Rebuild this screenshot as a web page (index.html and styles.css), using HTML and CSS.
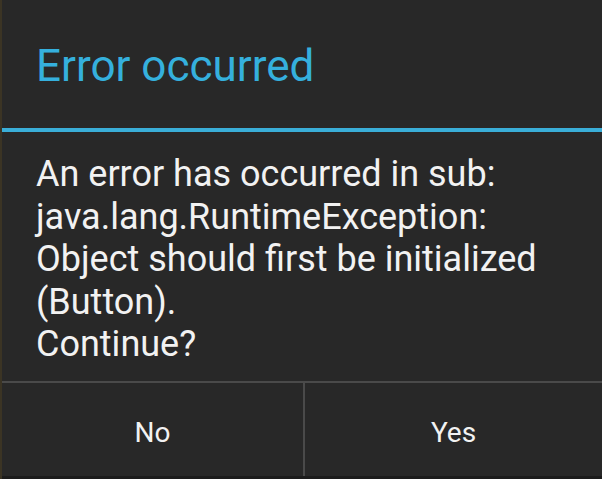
FILE: index.html
```html
<!DOCTYPE html>
<html>
<head>
<meta charset="utf-8">
<link rel="stylesheet" href="styles.css">
</head>
<body>
<div class="frame">
  <div class="dialog">
    <div class="title">Error occurred</div>
    <div class="rule"></div>
    <div class="message">An error has occurred in sub:<br>java.lang.RuntimeException:<br>Object should first be initialized<br>(Button).<br>Continue?</div>
    <div class="buttons">
      <div class="btn">No</div>
      <div class="btn">Yes</div>
    </div>
  </div>
</div>
</body>
</html>
```
FILE: styles.css
```css
html, body {
  margin: 0;
  padding: 0;
  width: 602px;
  height: 479px;
  overflow: hidden;
  background: #1c1c1c;
}
.frame {
  width: 602px;
  height: 479px;
  border-left: 2px solid #3b3424;
  box-sizing: border-box;
  padding-bottom: 3px;
}
.dialog {
  height: 476px;
  background: #282828;
  display: flex;
  flex-direction: column;
  font-family: Roboto, "Noto Sans", sans-serif;
}
.title {
  height: 128px;
  box-sizing: border-box;
  padding: 41px 0 0 34px;
  color: #35b0dd;
  font-size: 44px;
  line-height: 50px;
}
.rule {
  height: 4px;
  background: #3aaed8;
}
.message {
  padding: 21px 33px 0 34px;
  color: #f2f2f2;
  font-size: 36px;
  line-height: 42.5px;
  height: 249px;
  box-sizing: border-box;
}
.buttons {
  flex: 1;
  display: grid;
  grid-template-columns: 301px 1fr;
  border-top: 2px solid #4a4a4a;
}
.btn {
  display: flex;
  align-items: center;
  justify-content: center;
  color: #f2f2f2;
  font-size: 28px;
  padding-top: 6px;
}
.btn + .btn {
  border-left: 2px solid #4a4a4a;
}
```
